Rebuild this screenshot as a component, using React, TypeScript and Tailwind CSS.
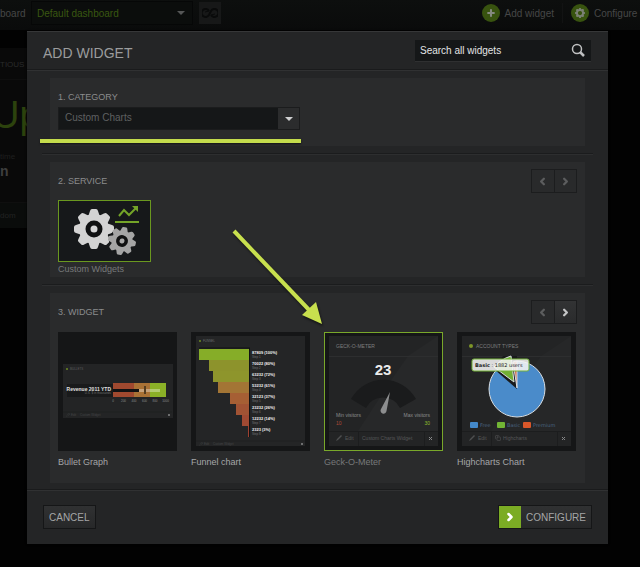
import React from "react";
import { ChevronLeft, ChevronRight, Pencil, Plus, Copy } from "lucide-react";

const SANS = "font-['Liberation_Sans',Arial,sans-serif]";

function Caret({ className }: { className: string }) {
  return (
    <svg viewBox="0 0 8 4" className={`pointer-events-none h-1 w-2 ${className}`} aria-hidden="true">
      <path d="M0 0h8L4 4z" fill="currentColor" />
    </svg>
  );
}

/** Eight-toothed gear centred on the origin with a radius of 20. */
function Gear({ transform, fill, hub, hole }: { transform: string; fill: string; hub: string; hole: string }) {
  const teeth = [0, 45, 90, 135, 180, 225, 270, 315];
  return (
    <g transform={transform}>
      {teeth.map((a) => (
        <path key={a} d="M-6 -12 L-4 -18 Q-3.5 -20 -2 -20 H2 Q3.500 -20 4 -18 L6 -12Z" transform={`rotate(${a})`} fill={fill} />
      ))}
      <circle r="15" fill={fill} />
      <circle r="6" fill={hub} stroke={hole} strokeWidth="5" />
    </g>
  );
}

function TopBar() {
  return (
    <header className="flex h-[30px] items-center bg-linear-to-b from-[#0d0f0e] to-[#0a0b0b] pb-1 text-[10px] text-[#464747]">
      <label htmlFor="dashboard" className="w-[31px] shrink-0">board</label>
      <div className="relative flex h-6 w-[162px] shrink-0 items-center border border-[#060707] bg-[#0b0d0c]">
        <select id="dashboard" className="h-full w-full appearance-none bg-transparent pl-[5px] text-[10px] text-[#3a5811] outline-none">
          <option>Default dashboard</option>
        </select>
        <Caret className="absolute right-[7px] text-[#555656]" />
      </div>
      <button aria-label="Loop dashboards" className="ml-[6px] flex h-[22px] w-[22px] shrink-0 items-center justify-center bg-[#171818] text-[#090a0a]">
        <svg viewBox="0 0 16 10" className="h-[10px] w-4" fill="none" stroke="currentColor" strokeWidth="2" aria-hidden="true">
          <path d="M7 3A4 4 0 1 0 7 7L9 3A4 4 0 1 1 9 7" />
          <path d="M4 0l3 3-4 1M12 10l-3-3 4-1" strokeWidth="1" />
        </svg>
      </button>
      <div className="ml-auto flex shrink-0 items-center">
        <button className="flex items-center gap-[5px]">
          <span className="flex size-[18px] items-center justify-center rounded-full bg-[#38530f] text-[#858a80]">
            <Plus size={10} strokeWidth={5} />
          </span>
          Add widget
        </button>
        <span className="mx-[8px] h-5 border-l border-[#121313]" />
        <button className="flex w-[69px] items-center gap-[5px] overflow-hidden whitespace-nowrap">
          <span className="flex size-[18px] shrink-0 items-center justify-center rounded-full bg-[#38530f]">
            <svg viewBox="-20 -20 40 40" className="size-[10px]" aria-hidden="true">
              <Gear transform="" fill="#7c8176" hub="#38530f" hole="#38530f" />
            </svg>
          </span>
          Configure D
        </button>
      </div>
    </header>
  );
}

function BoardBehind() {
  return (
    <main className="mt-[18px] h-[180px] w-[27px] overflow-hidden bg-[#090909]">
      <h2 className="h-8 border-b border-[#0e0e0e] pt-[11px] text-[8px] leading-3 text-[#2a2b2b]">TIOUS</h2>
      <p className="-ml-2 h-[71px] pt-[10px] text-[38px] leading-[50px] text-[#2c420d]">Up</p>
      <p className="text-[8px] leading-3 text-[#1f1f1f]">time</p>
      <p className="text-[14px] font-bold leading-4 text-[#3e3e3e]">n</p>
      <p className="mt-[23px] h-[26px] border-t border-[#0f0f0f] bg-[#0a0c0b] pt-[7px] text-[8px] leading-3 text-[#222323]">dom</p>
    </main>
  );
}

function Pager({ label, next }: { label: string; next: boolean }) {
  return (
    <div className="flex h-6 w-[46px] border border-[#1c1d1e] bg-[#292a2b]">
      <button aria-label={`Previous ${label}`} className="flex flex-1 items-center justify-center border-r border-[#1c1d1e] text-[#5c5d5e]">
        <ChevronLeft size={11} strokeWidth={5} />
      </button>
      <button
        aria-label={`Next ${label}`}
        className={`flex flex-1 items-center justify-center ${next ? "bg-linear-to-b from-[#323334] to-[#2a2b2c] text-[#c4c5c6]" : "text-[#5c5d5e]"}`}
      >
        <ChevronRight size={11} strokeWidth={5} />
      </button>
    </div>
  );
}

function Divider() {
  return <hr className="my-[7px] h-[2px] border-0 border-t border-t-[#1b1c1d] bg-[#2d2e2f]" />;
}

function Heading({ children }: { children: React.ReactNode }) {
  return <h2 className="text-[9px] leading-3 text-[#8b8c8d]">{children}</h2>;
}

function ServiceArt() {
  return (
    <svg viewBox="0 0 91 60" className="h-[60px] w-full" aria-hidden="true">
      <rect width="91" height="60" fill="#16181a" />
      <Gear transform="translate(35 28)" fill="#d3d3d3" hub="#d6d6d6" hole="#101112" />
      <circle cx="63" cy="40" r="13" fill="#16181a" />
      <Gear transform="translate(63 40) rotate(12) scale(.7)" fill="#a5a5a5" hub="#a9a9a9" hole="#101112" />
      <path d="M60 15l5-6 5 5 7-7" fill="none" stroke="#74a428" strokeWidth="2" />
      <path d="M73 5h6v6z" fill="#74a428" />
      <path d="M56 21h24" stroke="#74a428" strokeWidth="2" />
    </svg>
  );
}

function PreviewFooter({ name, small, y = 99 }: { name: string; small?: boolean; y?: number }) {
  if (small) {
    return (
      <g>
        <path d={`M5 ${y}h109`} stroke="#1f2021" />
        <Pencil x="8" y={y + 1} size={4} color="#4a4b4c" />
        <text x="13" y={y + 4} fontSize="3" fill="#454647">Edit</text>
        <text x="22" y={y + 4} fontSize="3" fill="#454647">{name}</text>
        <path d={`M110 ${y + 2}l2 2m0-2l-2 2`} stroke="#6d6e6f" />
      </g>
    );
  }
  return (
    <g>
      <path d="M5 99.5h109M34.5 100v14M100.5 100v14" stroke="#1c1d1e" />
      <path d="M12 109l1-2 4-4 1 1-4 4z" fill="#4e4f50" />
      <text x="21" y="108" fontSize="5" fill="#565758">Edit</text>
      <text x={name === "Highcharts" ? 46 : 38} y="108" fontSize="5" fill="#565758">{name}</text>
      <path d="M105 105l3 3m0-3l-3 3" stroke="#868788" />
    </g>
  );
}

function BulletPreview() {
  return (
    <svg viewBox="0 0 119 119" className="size-full" aria-hidden="true">
      <rect x="5" y="32" width="110" height="54" fill="#232425" />
      <circle cx="9" cy="37" r="1" fill="#6d8a22" />
      <text x="12" y="38" fontSize="3" fill="#5c5d5e">BULLETS</text>
      <rect x="9" y="52" width="46" height="13" fill="#191a1b" />
      <text x="53" y="59" fontSize="5" fontWeight="700" textAnchor="end" fill="#e0e0e0">Revenue 2011 YTD</text>
      <text x="53" y="62" fontSize="3" textAnchor="end" fill="#6c6d6e">U.S. $ in thousands</text>
      <rect x="55" y="51" width="21" height="14" fill="#a0492f" />
      <rect x="76" y="51" width="16" height="14" fill="#a97235" />
      <rect x="92" y="51" width="16" height="14" fill="#8bb127" />
      <rect x="55" y="57" width="26" height="3" fill="#111213" />
      <rect x="81" y="57" width="21" height="3" fill="#fff" fillOpacity=".35" />
      <rect x="86" y="54" width="2" height="8" fill="#553d20" />
      {[0, 200, 400, 600, 800, 1000].map((n, i) => (
        <text key={n} x={55 + i * 10.5} y="70" fontSize="3" textAnchor="middle" fill="#8a8b8c">{n}</text>
      ))}
      <PreviewFooter name="Custom Widget" small y={80} />
    </svg>
  );
}

const FUNNEL = [
  { label: "87809 (100%)", left: 8, color: "#86ad28" },
  { label: "70022 (80%)", left: 18, color: "#8d932c" },
  { label: "63232 (72%)", left: 22, color: "#8e952c" },
  { label: "53232 (61%)", left: 27, color: "#a37535" },
  { label: "32123 (37%)", left: 39, color: "#a65f34" },
  { label: "23232 (26%)", left: 45, color: "#a15334" },
  { label: "12232 (14%)", left: 51, color: "#a04a33" },
  { label: "2323 (3%)", left: 57, color: "#9d4030" },
];

function FunnelPreview() {
  return (
    <svg viewBox="0 0 119 119" className="size-full" aria-hidden="true">
      <rect x="5" y="4" width="109" height="110" fill="#242526" />
      <circle cx="9" cy="9" r="1" fill="#6d8a22" />
      <text x="12" y="10" fontSize="3" fill="#6c6d6e">FUNNEL</text>
      <path d="M8 16h51" stroke="#111213" />
      <path d="M58.5 16v89" stroke="#111213" />
      {FUNNEL.map((row, i) => (
        <g key={row.label}>
          <rect x={row.left} y={17 + i * 11} width={58 - row.left} height="11" fill={row.color} />
          <text x="61" y={22 + i * 11} fontSize="4" fontWeight="700" fill="#f0f0f0">{row.label}</text>
          <text x="61" y={26 + i * 11} fontSize="3" fill="#747576">{`Step ${i + 1}`}</text>
        </g>
      ))}
      <PreviewFooter name="Custom Widget" small y={109} />
    </svg>
  );
}

function GaugePreview() {
  return (
    <svg viewBox="0 0 119 119" className="size-full" aria-hidden="true">
      <rect x="5" y="4" width="109" height="110" fill="#232425" />
      <path d="M84 24L114 4V99H34L70 44z" fill="#272829" />
      <path d="M5 24.5h109" stroke="#2d2e2f" />
      <text x="12" y="16" fontSize="5" fill="#7d7e7f">GECK-O-METER</text>
      <text x="59" y="43" fontSize="15" fontWeight="700" textAnchor="middle" fill="#ececec">23</text>
      <path d="M27 67A37 37 0 0 1 92 67L76 76A19 19 0 0 0 42 76z" fill="#1a1b1c" />
      <path d="M66 60L62.5 79A3 3 0 1 1 57 77z" fill="#8d8e8f" />
      <text x="12" y="85" fontSize="5" fill="#8b8c8d">Min visitors</text>
      <text x="12" y="93" fontSize="5" fill="#b04a36">10</text>
      <text x="106" y="85" fontSize="5" textAnchor="end" fill="#8b8c8d">Max visitors</text>
      <text x="106" y="93" fontSize="5" textAnchor="end" fill="#8fbb2c">30</text>
      <PreviewFooter name="Custom Charts Widget" />
    </svg>
  );
}

const LEGEND = [
  { label: "Free", x: 13, color: "#4489ca" },
  { label: "Basic", x: 40, color: "#72b535" },
  { label: "Premium", x: 66, color: "#d9572a" },
];

function PiePreview() {
  return (
    <svg viewBox="0 0 119 119" className="size-full" aria-hidden="true">
      <rect x="5" y="4" width="109" height="110" fill="#232425" />
      <path d="M84 24L114 4V99H34L70 44z" fill="#262728" />
      <path d="M5 24.5h109" stroke="#2d2e2f" />
      <circle cx="14" cy="14" r="2" fill="#7d9529" />
      <text x="19" y="16" fontSize="5" fill="#7d7e7f">ACCOUNT TYPES</text>
      <circle cx="60" cy="57" r="28" fill="#4a8bca" stroke="#d7dde2" />
      <path d="M60 57L37 37L46 24H60z" fill="#191a1b" />
      <path d="M60 56L56 30Q58 29 60 29z" fill="#d56a44" stroke="#d7dde2" />
      <path d="M57 50L37 35Q44 27 54 24z" fill="#72b034" stroke="#d7dde2" />
      <rect x="15" y="27" width="57" height="12" rx="2" fill="#f5f5f5" fillOpacity=".88" stroke="#74b238" />
      <text x="18" y="35" fontSize="5" fill="#222" className="font-['DejaVu_Sans',sans-serif]">
        <tspan fontWeight="700">Basic</tspan> : 1882 users
      </text>
      {LEGEND.map((item) => (
        <g key={item.label}>
          <rect x={item.x} y="90" width="8" height="6" rx="1" fill={item.color} />
          <text x={item.x + 10} y="95" fontSize="5" fill="#4a6583" className="font-['DejaVu_Sans',sans-serif]">{item.label}</text>
        </g>
      ))}
      <PreviewFooter name="Highcharts" />
      <Copy x="38" y="103" size={6} color="#565758" />
    </svg>
  );
}

const WIDGETS = [
  { name: "Bullet Graph", Preview: BulletPreview },
  { name: "Funnel chart", Preview: FunnelPreview },
  { name: "Geck-O-Meter", Preview: GaugePreview, selected: true },
  { name: "Highcharts Chart", Preview: PiePreview },
];

function AddWidgetDialog() {
  return (
    <section
      role="dialog"
      aria-labelledby="dialog-title"
      className="relative border-t border-[#363738] bg-[#242526] shadow-[0_0_2px_#000]"
    >
      <header className="flex h-[37px] items-center justify-between pl-4 pr-[17px]">
        <h1 id="dialog-title" className="pt-1 text-[14px] leading-5 text-[#9b9c9d]">ADD WIDGET</h1>
        <div className="flex h-[22px] w-[176px] items-center border-b border-[#2f3031] bg-[#151718]">
          <input
            aria-label="Search all widgets"
            placeholder="Search all widgets"
            className="h-full min-w-0 flex-1 bg-transparent pl-[5px] text-[10px] text-[#e4e5e6] outline-none placeholder:text-[#e4e5e6]"
          />
          <button aria-label="Search" className="mr-[6px] text-[#bfc0c1]">
            <svg viewBox="0 0 14 14" className="size-[14px]" fill="none" stroke="currentColor" aria-hidden="true">
              <circle cx="6" cy="6" r="4.500" strokeWidth="1.500" />
              <path d="M9 9l4 4" strokeWidth="2.500" />
            </svg>
          </button>
        </div>
      </header>
      <hr className="h-[2px] border-0 border-t border-t-[#1a1b1c] bg-[#303132]" />

      <div className="px-[15px] pt-[7px]">
        <div className="mx-2 h-[68px] bg-[#2a2b2c] px-2 pt-[13px]">
          <label htmlFor="category" className="block text-[9px] leading-3 text-[#8b8c8d]">1. CATEGORY</label>
          <div className="relative mt-1 flex h-[23px] w-[242px] items-center border border-[#1b1c1d] bg-[#151718]">
            <select id="category" className="h-full w-full appearance-none bg-transparent pb-[2px] pl-[6px] text-[10px] text-[#5f6061] outline-none">
              <option>Custom Charts</option>
            </select>
            <span className="pointer-events-none absolute inset-y-0 right-0 flex w-[21px] items-center justify-center bg-[#2b2c2d]">
              <Caret className="text-[#cfd0d1]" />
            </span>
          </div>
        </div>
        <Divider />
        <div className="mx-2 flex h-[115px] items-start justify-between bg-[#2a2b2c] px-2 pt-[7px]">
          <div className="pt-[6px]">
            <Heading>2. SERVICE</Heading>
            <button className="mt-[13px] block text-left">
              <span className="block w-[93px] border border-[#6a981f]">
                <ServiceArt />
              </span>
              <span className="block pt-px text-[9px] leading-3 text-[#77797a]">Custom Widgets</span>
            </button>
          </div>
          <Pager label="service" next={false} />
        </div>
        <Divider />
        <div className="mx-2 h-[190px] bg-[#2a2b2c] px-2 pt-[7px]">
          <div className="flex items-start justify-between">
            <div className="pt-[6px]">
              <Heading>3. WIDGET</Heading>
            </div>
            <Pager label="widgets" next />
          </div>
          <ul className="mt-2 flex gap-[14px]">
            {WIDGETS.map(({ name, Preview, selected }) => (
              <li key={name}>
                <button className="block text-left">
                  <span className={`block size-[119px] bg-[#151617] ${selected ? "outline -outline-offset-1 outline-[#79a82a]" : ""}`}>
                    <Preview />
                  </span>
                  <span className={`block pt-[5px] text-[9px] leading-3 ${selected ? "text-[#77797a]" : "text-[#a5a6a7]"}`}>{name}</span>
                </button>
              </li>
            ))}
          </ul>
        </div>
      </div>

      <footer className="mt-[6px] flex h-[55px] items-center justify-between border-t border-[#1a1b1c] px-4 shadow-[inset_0_1px_0_#303132]">
        <button className="h-6 border border-[#151617] bg-linear-to-b from-[#303132] to-[#272829] px-[5px] text-[10px] text-[#a5a6a7]">CANCEL</button>
        <button className="flex h-6 items-center border border-[#151617] bg-linear-to-b from-[#303132] to-[#272829] text-[10px] text-[#a5a6a7]">
          <span className="flex h-full w-[22px] items-center justify-center bg-[#7bac24] text-white">
            <ChevronRight size={12} strokeWidth={5} />
          </span>
          <span className="px-[5px]">CONFIGURE</span>
        </button>
      </footer>

      {/* Tutorial annotations: underline below the category, arrow to the gauge */}
      <div className="absolute left-[13px] top-[107px] h-1 w-[261px] bg-[#c4dc4c] shadow-[0_1px_2px_#0008]" />
      <svg viewBox="0 0 100 104" className="pointer-events-none absolute left-[203px] top-[194px] h-[104px] w-[100px] drop-shadow-[1px_2px_1px_#0008]" aria-hidden="true">
        <path d="M4 5L82 87" stroke="#c8e04e" strokeWidth="4" />
        <path d="M92 98L72 89L86 76z" fill="#c8e04e" />
      </svg>
    </section>
  );
}

export default function App() {
  return (
    <div className={`relative min-h-screen overflow-hidden bg-[#020202] ${SANS}`}>
      <TopBar />
      <BoardBehind />
      <div className="absolute inset-x-0 top-0 pb-[22px] pl-[27px] pr-8 pt-[31px]">
        <AddWidgetDialog />
      </div>
    </div>
  );
}
